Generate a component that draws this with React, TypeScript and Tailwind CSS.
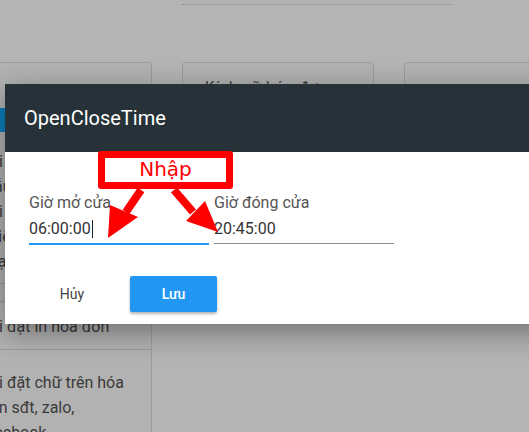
import React from 'react';

const sideLines = ['Cài đặt', 'Mẫu hóa', 'Cài đặt', 'Thiết lập', 'Loại bo'];

const App = () => {
  return (
    <div className="relative w-[529px] h-[432px] overflow-hidden bg-[#b4b4b4] font-['Roboto',sans-serif]">
      {/* page behind the overlay */}
      <div className="flex flex-col">
        <div className="h-[4px]" />
        <div className="ml-[182px] w-[270px] border-t border-dotted border-[#8a8a8a]" />

        <div className="mt-[57px] flex items-start gap-[30px]">
          {/* left card */}
          <div className="ml-[-35px] w-[187px] shrink-0 rounded border border-[#9c9c9c] bg-[#b2b2b2] flex flex-col pb-[20px]">
            <div className="h-[45px] shrink-0" />
            <div className="h-[24px] shrink-0 bg-[#0b7fbd] mr-[20px] ml-[16px]" />
            <div className="h-[13px] shrink-0" />
            <div className="h-[139px] shrink-0 pl-[14px] pt-[4px] text-[16px] leading-[25px] text-[#3a3a3a] border-b border-[#9a9a9a]">
              {sideLines.map((t, i) => (
                <div key={i} className="whitespace-nowrap">{t}</div>
              ))}
            </div>
            <div className="h-[18px] shrink-0 border-b border-[#9a9a9a]" />
            <div className="h-[48px] shrink-0 pl-[14px] pt-[2px] flex items-center text-[16px] text-[#3a3a3a] border-b border-[#9a9a9a]">
              Cài đặt in hóa đơn
            </div>
            <div className="shrink-0 pl-[14px] pt-[20px] text-[16px] leading-[25px] text-[#3a3a3a]">
              <div>Cài đặt chữ trên hóa</div>
              <div>đơn sđt, zalo,</div>
              <div>facebook</div>
            </div>
          </div>

          {/* middle card */}
          <div className="w-[192px] h-[140px] shrink-0 rounded border border-[#9c9c9c] bg-[#b2b2b2] px-[22px] pt-[13px] text-[15px] tracking-[1px] text-[#3a3a3a]">
            Kích cỡ hóa đơn
          </div>

          {/* right card */}
          <div className="w-[160px] h-[140px] shrink-0 rounded border border-[#9c9c9c] bg-[#b2b2b2]" />
        </div>
      </div>

      {/* dialog */}
      <div className="absolute left-[5px] top-[84px] w-[560px] bg-white shadow-[0_8px_28px_rgba(0,0,0,0.38)]">
        <div className="h-[68px] bg-[#263238] px-[19px] flex items-center text-white text-[20px] font-normal">
          OpenCloseTime
        </div>
        <div className="pt-[41px] px-[24px] flex gap-[5px]">
          <div className="w-[180px] flex flex-col">
            <div className="text-[16px] leading-[19px] text-[#555]">Giờ mở cửa</div>
            <div className="mt-[5px] h-[28px] text-[16px] leading-[24px] pb-[2px] text-[#333] border-b-2 border-[#2196f3] flex items-center">
              06:00:00<span className="inline-block w-px h-[18px] bg-[#222] ml-px" />
            </div>
          </div>
          <div className="w-[180px] flex flex-col">
            <div className="text-[16px] leading-[19px] text-[#555]">Giờ đóng cửa</div>
            <div className="mt-[5px] h-[27px] text-[16px] leading-[24px] text-[#333] border-b border-[#8f8f8f]">
              20:45:00
            </div>
          </div>
        </div>
        <div className="mt-[31px] pl-[24px] pb-[12px] flex gap-[15px]">
          <button className="w-[86px] h-[36px] text-[14px] text-[#444]">Hủy</button>
          <button className="w-[87px] h-[36px] rounded-[2px] bg-[#2196f3] text-white text-[14px] font-medium shadow-[0_2px_3px_rgba(0,0,0,0.3)]">
            Lưu
          </button>
        </div>
      </div>

      {/* annotation box */}
      <div className="absolute left-[98px] top-[151px] w-[135px] h-[38px] border-[7px] border-[#ff0000] rounded-[3px] bg-white flex justify-center">
        <span className="font-['DejaVu_Sans',sans-serif] text-[20px] leading-[22px] text-[#ff0000]">Nhập</span>
      </div>

      {/* arrows */}
      <svg className="absolute left-0 top-0" width="529" height="432" viewBox="0 0 529 432">
        <line x1="141" y1="190" x2="126" y2="212" stroke="#ff0000" strokeWidth="8" />
        <polygon points="110,205 138,217 108,238" fill="#ff0000" />
        <line x1="174" y1="190" x2="193" y2="212" stroke="#ff0000" strokeWidth="8" />
        <polygon points="186,221 205,201 218,232" fill="#ff0000" />
      </svg>
    </div>
  );
};

export default App;
